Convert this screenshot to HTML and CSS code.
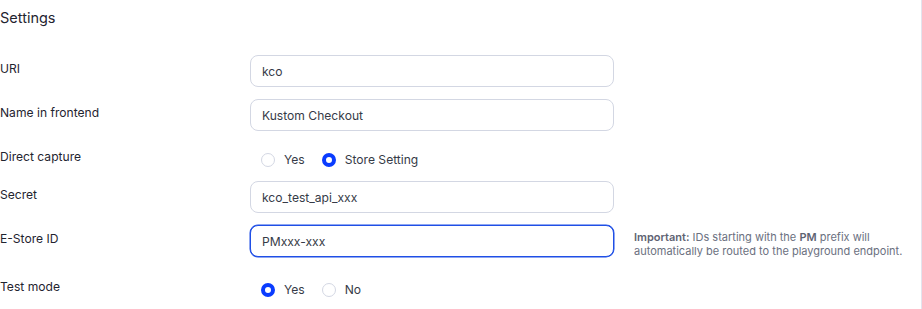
FILE: index.html
```html
<!DOCTYPE html>
<html>
<head>
<meta charset="utf-8">
<link rel="stylesheet" href="styles.css">
</head>
<body>
<div class="panel">
  <h2 class="title">Settings</h2>
  <div class="form">
    <div class="row">
      <label class="label">URI</label>
      <div class="control"><input class="input" type="text" value="kco"></div>
    </div>
    <div class="row">
      <label class="label">Name in frontend</label>
      <div class="control"><input class="input" type="text" value="Kustom Checkout"></div>
    </div>
    <div class="row">
      <label class="label">Direct capture</label>
      <div class="control radios">
        <span class="radio"><span class="dot"></span>Yes</span>
        <span class="radio"><span class="dot on"></span>Store Setting</span>
      </div>
    </div>
    <div class="row">
      <label class="label">Secret</label>
      <div class="control"><input class="input" type="text" value="kco_test_api_xxx"></div>
    </div>
    <div class="row tall">
      <label class="label">E-Store ID</label>
      <div class="control"><input class="input focus" type="text" value="PMxxx-xxx"></div>
      <p class="help"><b>Important:</b> IDs starting with the <b>PM</b> prefix will automatically be routed to the playground endpoint.</p>
    </div>
    <div class="row">
      <label class="label">Test mode</label>
      <div class="control radios">
        <span class="radio"><span class="dot on"></span>Yes</span>
        <span class="radio"><span class="dot"></span>No</span>
      </div>
    </div>
  </div>
</div>
</body>
</html>
```
FILE: styles.css
```css
* { box-sizing: border-box; }
html, body { margin: 0; padding: 0; background: #fff; }
body {
  font-family: Inter, "Noto Sans", sans-serif;
  color: #1f2430;
}
.panel {
  width: 922px;
  height: 309px;
  border-right: 1px solid #e3e4ee;
  overflow: hidden;
}
.title {
  margin: 0;
  padding-top: 9px;
  font-size: 14.5px;
  font-weight: 400;
  line-height: 18px;
  height: 55px;
  color: #1f2430;
}
.form {
  display: flex;
  flex-direction: column;
  gap: 12px;
}
.row {
  display: grid;
  grid-template-columns: 250px 364px 1fr;
  align-items: start;
  min-height: 26px;
}
.row.tall { min-height: 36px; }
.label {
  font-size: 12.1px;
  line-height: 28px;
  height: 26px;
  color: #1f2430;
}
.input {
  display: block;
  width: 364px;
  height: 32px;
  border: 1px solid #d3d7e3;
  border-radius: 8px;
  padding: 0 11px;
  font-family: Inter, "Noto Sans", sans-serif;
  font-size: 12.1px;
  color: #363b47;
  background: #fff;
  outline: none;
}
.input.focus {
  border: 1px solid #1f4fe6;
  box-shadow: 0 0 0 0.5px #1f4fe6;
}
.radios {
  display: flex;
  align-items: center;
  gap: 17px;
  padding-left: 11px;
  padding-top: 10px;
}
.radio {
  display: inline-flex;
  align-items: center;
  gap: 9px;
  font-size: 12.1px;
  line-height: 14px;
  color: #363b47;
}
.dot {
  width: 14px;
  height: 14px;
  border-radius: 50%;
  border: 1px solid #d3d7e3;
  background: #fff;
  flex: none;
}
.dot.on {
  border: 4px solid #0a3cff;
}
.help {
  margin: 0 0 0 20px;
  padding-top: 5px;
  font-size: 11px;
  line-height: 14px;
  color: #6b7080;
}
.help b { font-weight: 600; color: #5e6372; }
```
